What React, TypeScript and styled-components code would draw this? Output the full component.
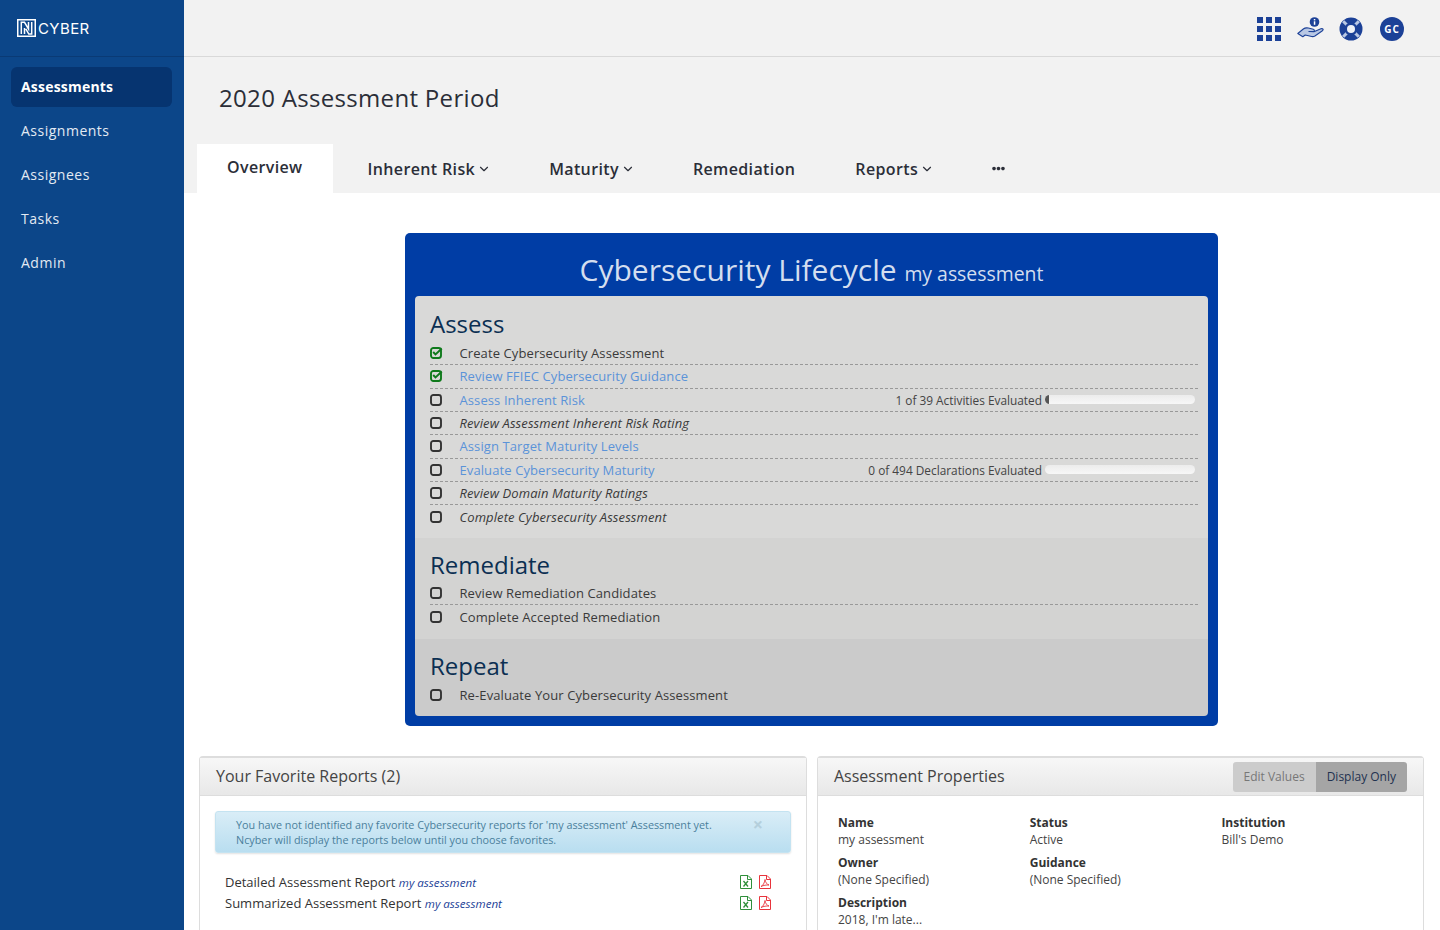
import React from "react";
import styled, { createGlobalStyle } from "styled-components";
import { FaEllipsisH } from "react-icons/fa";
import { ChevronDown } from "lucide-react";

const navItems = ["Assessments", "Assignments", "Assignees", "Tasks", "Admin"];

interface Step {
  label: string;
  done?: boolean;
  link?: boolean;
  italic?: boolean;
  progress?: string;
  percent?: number;
}

const assessSteps: Step[] = [
  { label: "Create Cybersecurity Assessment", done: true },
  { label: "Review FFIEC Cybersecurity Guidance", done: true, link: true },
  { label: "Assess Inherent Risk", link: true, progress: "1 of 39 Activities Evaluated", percent: 2.6 },
  { label: "Review Assessment Inherent Risk Rating", italic: true },
  { label: "Assign Target Maturity Levels", link: true },
  { label: "Evaluate Cybersecurity Maturity", link: true, progress: "0 of 494 Declarations Evaluated", percent: 0 },
  { label: "Review Domain Maturity Ratings", italic: true },
  { label: "Complete Cybersecurity Assessment", italic: true },
];
const remediateSteps: Step[] = [
  { label: "Review Remediation Candidates" },
  { label: "Complete Accepted Remediation" },
];
const repeatSteps: Step[] = [{ label: "Re-Evaluate Your Cybersecurity Assessment" }];

const reports = ["Detailed Assessment Report", "Summarized Assessment Report"];

const properties = [
  { name: "Name", value: "my assessment" },
  { name: "Status", value: "Active" },
  { name: "Institution", value: "Bill's Demo" },
  { name: "Owner", value: "(None Specified)" },
  { name: "Guidance", value: "(None Specified)" },
  { name: "", value: "" },
  { name: "Description", value: "2018, I'm late..." },
];

function CheckBox({ done }: { done?: boolean }) {
  const color = done ? "#0f7a1c" : "#333";
  return (
    <svg width="13" height="12" viewBox="0 0 13 12" fill="none">
      <rect x="1" y="1" width="10" height="10" rx="2.4" stroke={color} strokeWidth="1.9" />
      {done && <path d="M3.2 5l2.3 2.5 6.300-6" stroke={color} strokeWidth="1.9" />}
    </svg>
  );
}

function FileIcon({ color, kind }: { color: string; kind: "xls" | "pdf" }) {
  return (
    <svg width="12" height="14" viewBox="0 0 12 14" fill="none" stroke={color}>
      <path d="M.5.5h7.5l3.5 3.5v9.5h-11z" />
      <path d="M7.5.5v4h4" />
      {kind === "xls" ? (
        <path d="M3.5 6l4.5 5.5M8 6l-4.5 5.5" strokeWidth="1.3" />
      ) : (
        <path d="M2 11.5c2-1 3.5-3.500 4-7 .5 3 2 5 4 5.500-2.500-.2-5.500.3-8 1.500z" strokeWidth=".9" />
      )}
    </svg>
  );
}

function Section({ title, steps, shade }: { title: string; steps: Step[]; shade: string }) {
  return (
    <PhaseSection $shade={shade}>
      <PhaseTitle>{title}</PhaseTitle>
      {steps.map((step) => (
        <StepRow key={step.label}>
          <StepIcon>
            <CheckBox done={step.done} />
          </StepIcon>
          <StepLabel $link={step.link} $italic={step.italic}>
            {step.label}
          </StepLabel>
          {step.progress && (
            <>
              <ProgressText>{step.progress}</ProgressText>
              <ProgressTrack>
                <ProgressFill style={{ width: `${step.percent}%` }} />
              </ProgressTrack>
            </>
          )}
        </StepRow>
      ))}
    </PhaseSection>
  );
}

export default function App() {
  return (
    <Page>
      <GlobalStyle />
      <Sidebar>
        <Brand>
          <svg width="19" height="18" viewBox="0 0 19 18" fill="none" stroke="#fff">
            <rect x="0.75" y="0.75" width="17.5" height="16.5" strokeWidth="1.5" />
            <path d="M4.300 15V3.300H7.500L11.500 10V3M7.500 15V9M14.700 3V15H11.800L8.800 9.800" strokeWidth="1.5" />
          </svg>
          <BrandName>CYBER</BrandName>
        </Brand>
        <Nav>
          {navItems.map((item, idx) => (
            <NavItem key={item} $active={idx === 0}>
              {item}
            </NavItem>
          ))}
        </Nav>
      </Sidebar>
      <Main>
        <TopBar>
          <AppsGrid>
            {Array.from({ length: 9 }).map((_, idx) => (
              <i key={idx} />
            ))}
          </AppsGrid>
          <svg width="28" height="24" viewBox="0 0 28 24">
            <circle cx="17.5" cy="5" r="4.8" fill="#1c4197" />
            <rect x="16.800" y="4.300" width="1.5" height="3.500" fill="#fff" />
            <rect x="16.800" y="2" width="1.500" height="1.400" fill="#fff" />
            <path
              d="M.8 16.500l5.500-4.500c1.500-1.200 3-1.400 5-1l5 1.200c1.500.4 1.400 2.300-.4 2.300h-4l5 .3 7-3c2-.7 3 1 1.500 2l-7.500 5.200c-1 .6-2 .8-3.200.5l-6.500-1.500-2.400 1.700z"
              fill="#b9c8e4"
              stroke="#1c4197"
              strokeWidth="1.100"
              strokeLinejoin="round"
            />
          </svg>
          <RingIcon width="24" height="24" viewBox="0 0 24 24">
            <circle cx="12" cy="12" r="11.500" fill="#1c4197" />
            <path d="M4.200 4.200L19.800 19.800M19.800 4.200L4.200 19.800" stroke="#b9c8e4" strokeWidth="3" />
            <circle cx="12" cy="12" r="6.500" fill="#1c4197" />
            <circle cx="12" cy="12" r="4" fill="#eef1f7" />
          </RingIcon>
          <Avatar>GC</Avatar>
        </TopBar>
        <PageHead>
          <PageTitle>2020 Assessment Period</PageTitle>
          <Tabs>
            <Tab $active>Overview</Tab>
            <Tab>
              Inherent Risk
              <Caret />
            </Tab>
            <Tab>
              Maturity
              <Caret />
            </Tab>
            <Tab>Remediation</Tab>
            <Tab>
              Reports
              <Caret />
            </Tab>
            <Tab>
              <FaEllipsisH size={13} />
            </Tab>
          </Tabs>
        </PageHead>
        <Content>
          <Lifecycle>
            <LifecycleTitle>
              Cybersecurity Lifecycle <small>my assessment</small>
            </LifecycleTitle>
            <LifecycleBody>
              <Section title="Assess" steps={assessSteps} shade="#d9d9d8" />
              <Section title="Remediate" steps={remediateSteps} shade="#d3d3d2" />
              <Section title="Repeat" steps={repeatSteps} shade="#cbcbcb" />
            </LifecycleBody>
          </Lifecycle>
          <Panels>
            <Panel>
              <PanelHeader>
                <PanelTitle>Your Favorite Reports (2)</PanelTitle>
              </PanelHeader>
              <ReportsBody>
                <Alert>
                  <span>
                    You have not identified any favorite Cybersecurity reports for 'my assessment' Assessment yet.
                    <br />
                    Ncyber will display the reports below until you choose favorites.
                  </span>
                  <AlertClose>×</AlertClose>
                </Alert>
                <ReportList>
                  {reports.map((report) => (
                    <ReportRow key={report}>
                      <span>
                        {report} <em>my assessment</em>
                      </span>
                      <ReportIcons>
                        <FileIcon kind="xls" color="#2f8f3a" />
                        <FileIcon kind="pdf" color="#e8343c" />
                      </ReportIcons>
                    </ReportRow>
                  ))}
                </ReportList>
              </ReportsBody>
            </Panel>
            <Panel>
              <PanelHeader>
                <PanelTitle>Assessment Properties</PanelTitle>
                <ButtonGroup>
                  <ToggleButton>Edit Values</ToggleButton>
                  <ToggleButton $active>Display Only</ToggleButton>
                </ButtonGroup>
              </PanelHeader>
              <PropertyGrid>
                {properties.map((prop, idx) => (
                  <Property key={idx}>
                    <b>{prop.name}</b>
                    <span>{prop.value}</span>
                  </Property>
                ))}
              </PropertyGrid>
            </Panel>
          </Panels>
        </Content>
      </Main>
    </Page>
  );
}

const GlobalStyle = createGlobalStyle`
  html, body {
    margin: 0;
    height: 930px;
    overflow: hidden;
    background: #fff;
    font-family: "Open Sans", "Noto Sans", sans-serif;
    color: #333;
  }
`;
const Page = styled.div`
  display: flex;
  height: 930px;
  overflow: hidden;
`;
const Sidebar = styled.aside`
  background: #0c4689;
  flex: 0 0 184px;
  width: 184px;
`;
const Brand = styled.div`
  align-items: center;
  border-bottom: 1px solid #0a3a75;
  box-sizing: border-box;
  display: flex;
  gap: 2px;
  height: 57px;
  padding: 0 0 0 17px;
`;
const BrandName = styled.span`
  color: #fff;
  font-family: "Inter", sans-serif;
  font-size: 15px;
  font-weight: 400;
  letter-spacing: 0.4px;
`;
const Nav = styled.nav`
  display: flex;
  flex-direction: column;
  gap: 4px;
  padding: 10px 12px 0 11px;
`;
const NavItem = styled.a<{ $active?: boolean }>`
  background: ${(p) => (p.$active ? "#063470" : "transparent")};
  border-radius: 6px;
  color: ${(p) => (p.$active ? "#fff" : "#e3eaf3")};
  font-size: 14px;
  font-weight: ${(p) => (p.$active ? 700 : 500)};
  height: 40px;
  letter-spacing: ${(p) => (p.$active ? "0.2px" : "0.5px")};
  line-height: 40px;
  padding-left: 10px;
`;
const Main = styled.main`
  display: flex;
  flex: 1;
  flex-direction: column;
  min-width: 0;
`;
const TopBar = styled.header`
  align-items: center;
  background: #f2f2f2;
  border-bottom: 1px solid #d9d9d9;
  box-sizing: border-box;
  display: flex;
  flex: 0 0 57px;
  gap: 16px;
  justify-content: flex-end;
  padding: 2px 36px 0 0;
`;
const AppsGrid = styled.div`
  display: grid;
  gap: 3px;
  grid-template-columns: repeat(3, 6px);
  > i {
    background: #1c4197;
    display: block;
    height: 6px;
  }
`;
const RingIcon = styled.svg`
  margin: 0 1px 0 -2px;
`;
const Avatar = styled.span`
  align-items: center;
  background: #1c4197;
  border-radius: 50%;
  color: #fff;
  display: flex;
  font-size: 10px;
  font-weight: 700;
  height: 24px;
  justify-content: center;
  letter-spacing: 1px;
  width: 24px;
`;
const PageHead = styled.div`
  background: #f2f2f2;
  display: flex;
  flex: 0 0 136px;
  flex-direction: column;
  justify-content: space-between;
  box-sizing: border-box;
  padding: 24px 0 0 13px;
`;
const PageTitle = styled.h1`
  color: #2b2e38;
  font-size: 24px;
  font-weight: 400;
  letter-spacing: 0.32px;
  line-height: 34px;
  margin: 0 0 0 22px;
`;
const Tabs = styled.div`
  align-items: stretch;
  display: flex;
  height: 49px;
`;
const Tab = styled.a<{ $active?: boolean }>`
  align-items: center;
  background: ${(p) => (p.$active ? "#fff" : "transparent")};
  color: #2b2e38;
  display: flex;
  font-size: 16px;
  font-weight: 600;
  letter-spacing: 0.37px;
  margin-right: ${(p) => (p.$active ? "5px" : "0")};
  padding: ${(p) => (p.$active ? "0 30px 4px" : "0 30px")};
  white-space: pre;
`;
const Caret = styled(ChevronDown)`
  height: 14px;
  margin: 0 -2px 0 2px;
  width: 14px;
`;
const Content = styled.div`
  background: #fff;
  flex: 1;
  padding: 40px 16px 0 15px;
`;
const Lifecycle = styled.section`
  background: #003da5;
  border-radius: 5px;
  box-sizing: border-box;
  margin: 0 206px 0 206px;
  padding: 0 10px 10px;
`;
const LifecycleTitle = styled.h2`
  color: #d3deef;
  font-size: 30px;
  font-weight: 400;
  height: 63px;
  line-height: 73px;
  margin: 0;
  text-align: center;
  > small {
    font-size: 19.400px;
  }
`;
const LifecycleBody = styled.div`
  border-radius: 4px;
  overflow: hidden;
`;
const PhaseSection = styled.div<{ $shade: string }>`
  background: ${(p) => p.$shade};
  padding: 9.500px 10px 10px 15px;
  &:first-child {
    padding: 10px 10px 9px 15px;
    > h3 {
      margin-bottom: 1px;
    }
  }
  &:last-child {
    padding-bottom: 9px;
  }
`;
const PhaseTitle = styled.h3`
  color: #0b2f52;
  font-size: 24px;
  font-weight: 400;
  line-height: 35px;
  margin: 0;
`;
const StepRow = styled.div`
  align-items: center;
  border-bottom: 1px dashed #999;
  box-sizing: border-box;
  display: flex;
  height: 23.33px;
  padding-right: 3px;
  &:last-child {
    border-bottom: 0;
  }
`;
const StepIcon = styled.span`
  display: flex;
  flex: 0 0 29.500px;
`;
const StepLabel = styled.span<{ $link?: boolean; $italic?: boolean }>`
  color: ${(p) => (p.$link ? "#5b93d8" : "#3a3a3a")};
  flex: 1;
  font-size: 13px;
  font-style: ${(p) => (p.$italic ? "italic" : "normal")};
  letter-spacing: 0.1px;
`;
const ProgressText = styled.span`
  color: #444;
  font-size: 11.850px;
  margin-right: 3px;
  padding-top: 1px;
`;
const ProgressTrack = styled.div`
  background: linear-gradient(#ececec, #f7f7f7);
  border-radius: 5px;
  height: 9px;
  overflow: hidden;
  width: 150px;
`;
const ProgressFill = styled.div`
  background: #555;
  height: 100%;
`;
const Panels = styled.div`
  display: grid;
  gap: 10px;
  grid-template-columns: 608px 607px;
  margin-top: 30px;
`;
const Panel = styled.section`
  border: 1px solid #ddd;
  border-top-width: 2px;
  border-radius: 4px 4px 0 0;
  height: 300px;
`;
const PanelHeader = styled.div`
  align-items: center;
  background: linear-gradient(#f7f7f7, #e8e8e8);
  border-bottom: 1px solid #ddd;
  box-sizing: border-box;
  display: flex;
  height: 38px;
  justify-content: space-between;
  padding: 0 16px;
`;
const PanelTitle = styled.h4`
  color: #444;
  font-size: 16px;
  font-weight: 400;
  margin: 0;
`;
const ButtonGroup = styled.div`
  border-radius: 3px;
  display: flex;
  margin-top: 2px;
  overflow: hidden;
`;
const ToggleButton = styled.span<{ $active?: boolean }>`
  background: ${(p) => (p.$active ? "#a5a5a5" : "#ccc")};
  color: ${(p) => (p.$active ? "#1f3250" : "#777")};
  font-size: 12px;
  line-height: 30px;
  padding: 0 11px;
`;
const ReportsBody = styled.div`
  padding: 15px 15px 0;
`;
const Alert = styled.div`
  background: linear-gradient(#d9edf7, #b9def0);
  border: 1px solid #c4e3f1;
  border-radius: 3px;
  box-shadow: 0 1px 2px rgba(0, 0, 0, 0.12);
  box-sizing: border-box;
  color: #4a7f9c;
  display: flex;
  font-size: 10.800px;
  height: 42px;
  justify-content: space-between;
  line-height: 15px;
  padding: 5px 27px 0 20px;
`;
const AlertClose = styled.span`
  color: #b4cfdc;
  font-size: 18px;
  font-weight: 700;
  line-height: 15px;
`;
const ReportList = styled.div`
  padding: 19px 20px 0 10px;
`;
const ReportRow = styled.div`
  align-items: center;
  display: flex;
  font-size: 13px;
  height: 21px;
  justify-content: space-between;
  color: #333;
  > span > em {
    color: #1c4197;
    font-size: 11.600px;
  }
`;
const ReportIcons = styled.div`
  display: flex;
  gap: 7px;
`;
const PropertyGrid = styled.div`
  display: grid;
  grid-template-columns: repeat(3, 191.700px);
  padding: 18px 0 0 20px;
`;
const Property = styled.div`
  display: flex;
  flex-direction: column;
  font-size: 12px;
  height: 40px;
  line-height: 17px;
  > b {
    color: #333;
    font-weight: 700;
  }
  > span {
    color: #444;
  }
`;
